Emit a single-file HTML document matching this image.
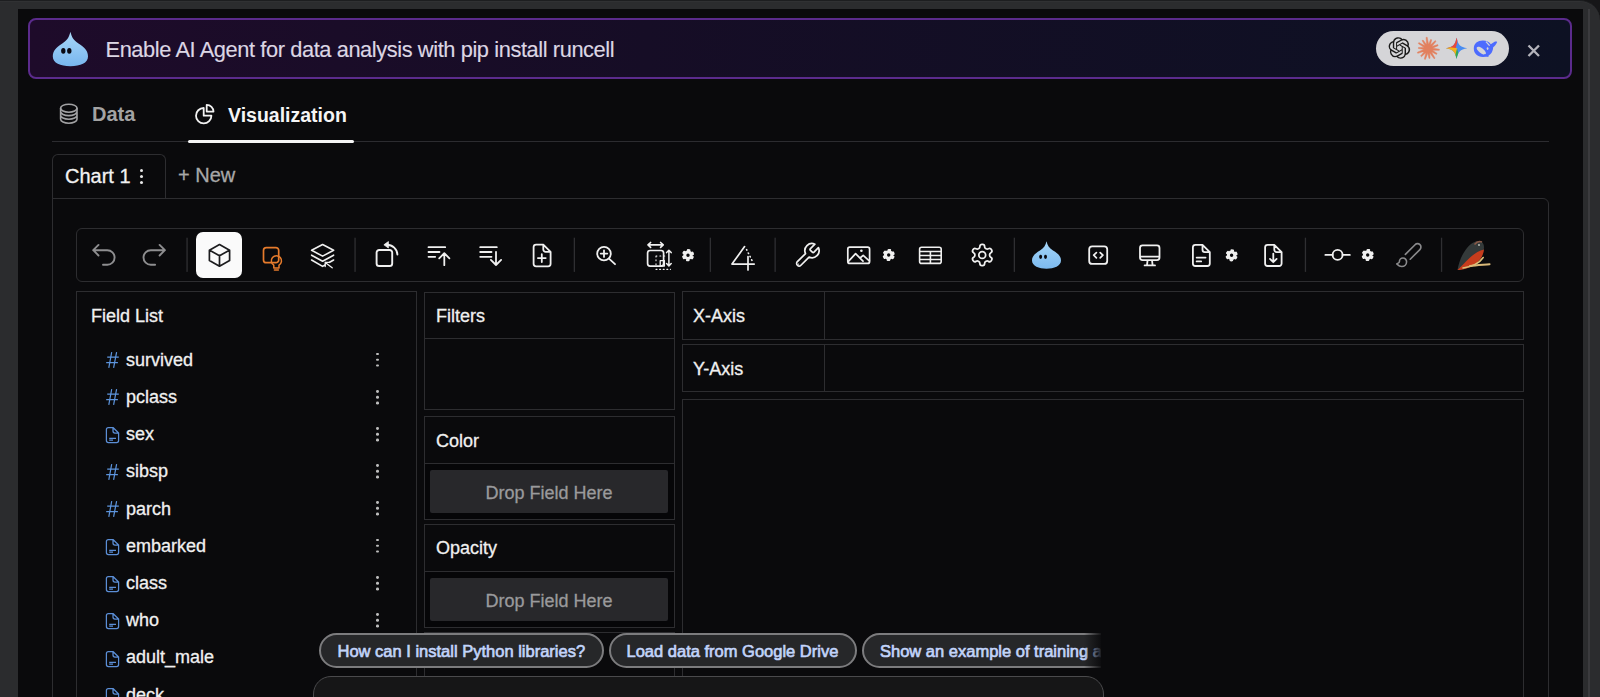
<!DOCTYPE html>
<html><head><meta charset="utf-8">
<style>
*{box-sizing:border-box;margin:0;padding:0}
html,body{width:1600px;height:697px;overflow:hidden;background:#161618}
body{font-family:"Liberation Sans",sans-serif;position:relative}
.a{position:absolute}
.t{position:absolute;white-space:nowrap;line-height:1;-webkit-text-stroke:0.3px currentColor}
.b{border:1px solid #2d2d30}
svg{position:absolute;overflow:visible}
.pt{font-size:16.5px;color:#c2d4fa;-webkit-text-stroke:0.65px #c2d4fa}
.fl{left:126px;font-size:18px;color:#f0f0f0}
.keb{position:absolute;left:376.2px;width:2.8px;height:2.8px;border-radius:50%;background:#bdbdbd;box-shadow:0 5.8px 0 #bdbdbd,0 11.6px 0 #bdbdbd}
</style></head><body>
<!-- window frame -->
<div class="a" style="left:0;top:0;width:1600px;height:697px;background:#2b2c2e;border-top-right-radius:20px;border-top:1px solid #1d1e20;box-shadow:inset 0 1px 0 #303133"></div>
<div class="a" style="left:1588px;top:9px;width:2px;height:688px;background:#3b3b3e"></div>
<div class="a" style="left:18px;top:9px;width:1564.5px;height:688px;background:#0a0a0c"></div>

<!-- banner -->
<div class="a" style="left:28px;top:18px;width:1544px;height:61px;border:2px solid #5b2b8c;border-radius:8px;background:linear-gradient(90deg,#1e0b2a 0%,#160d26 40%,#0d1123 100%)"></div>
<div class="t" style="left:105.5px;top:38.6px;font-size:21.8px;letter-spacing:-0.4px;color:#dcd6e4;-webkit-text-stroke:0.15px #dcd6e4">Enable AI Agent for data analysis with pip install runcell</div>
<div class="a" style="left:1376px;top:31px;width:133px;height:35px;border-radius:18px;background:#d5d5d8"></div>
<!--BANNER-->
<svg style="left:0;top:0" width="1600" height="100" viewBox="0 0 1600 100"><defs><linearGradient id="dg2" x1="0" y1="0" x2="0" y2="1"><stop offset="0" stop-color="#a9d8f9"/><stop offset="1" stop-color="#78b6ee"/></linearGradient></defs><path d="M70.4 31.8C71.6 37 73.6 40.5 78.5 43.5C85 47.5 88 51 88 56.5C88 63 80.5 66.2 70.4 66.2C60.3 66.2 52.8 63 52.8 56.5C52.8 51 55.8 47.5 62.3 43.5C67.2 40.5 69.2 37 70.4 31.8Z" fill="url(#dg2)"/><ellipse cx="63.3" cy="50.8" rx="2.2" ry="2.9" fill="#0a0a14"/><ellipse cx="69.3" cy="50.8" rx="2.2" ry="2.9" fill="#0a0a14"/><g transform="translate(1388.6 37.2) scale(0.9)"><path fill="#1a1a1a" d="M22.2819 9.8211a5.9847 5.9847 0 0 0-.5157-4.9108 6.0462 6.0462 0 0 0-6.5098-2.9A6.0651 6.0651 0 0 0 4.9807 4.1818a5.9847 5.9847 0 0 0-3.9977 2.9 6.0462 6.0462 0 0 0 .7427 7.0966 5.98 5.98 0 0 0 .511 4.9107 6.051 6.051 0 0 0 6.5146 2.9001A5.9847 5.9847 0 0 0 13.2599 24a6.0557 6.0557 0 0 0 5.7718-4.2058 5.9894 5.9894 0 0 0 3.9977-2.9001 6.0557 6.0557 0 0 0-.7475-7.0729zm-9.022 12.6081a4.4755 4.4755 0 0 1-2.8764-1.0408l.1419-.0804 4.7783-2.7582a.7948.7948 0 0 0 .3927-.6813v-6.7369l2.02 1.1686a.071.071 0 0 1 .038.052v5.5826a4.504 4.504 0 0 1-4.4945 4.4944zm-9.6607-4.1254a4.4708 4.4708 0 0 1-.5346-3.0137l.142.0852 4.783 2.7582a.7712.7712 0 0 0 .7806 0l5.8428-3.3685v2.3324a.0804.0804 0 0 1-.0332.0615L9.74 19.9502a4.4992 4.4992 0 0 1-6.1408-1.6464zM2.3408 7.8956a4.485 4.485 0 0 1 2.3655-1.9728V11.6a.7664.7664 0 0 0 .3879.6765l5.8144 3.3543-2.0201 1.1685a.0757.0757 0 0 1-.071 0l-4.8303-2.7865A4.504 4.504 0 0 1 2.3408 7.872zm16.5963 3.8558L13.1038 8.364 15.1192 7.2a.0757.0757 0 0 1 .071 0l4.8303 2.7913a4.4944 4.4944 0 0 1-.6765 8.1042v-5.6772a.79.79 0 0 0-.407-.667zm2.0107-3.0231l-.142-.0852-4.7735-2.7818a.7759.7759 0 0 0-.7854 0L9.409 9.2297V6.8974a.0662.0662 0 0 1 .0284-.0615l4.8303-2.7866a4.4992 4.4992 0 0 1 6.6802 4.66zM8.3065 12.863l-2.02-1.1638a.0804.0804 0 0 1-.038-.0567V6.0742a4.4992 4.4992 0 0 1 7.3757-3.4537l-.142.0805L8.704 5.459a.7948.7948 0 0 0-.3927.6813zm1.0976-2.3654l2.602-1.4998 2.6069 1.4998v2.9994l-2.5974 1.4997-2.6067-1.4997Z"/></g><path d="M1428.09 50.05L1439.31 50.34L1439.41 49.22L1428.31 47.55ZM1427.56 49.87L1436.51 54.39L1437.08 53.42L1428.84 47.73ZM1427.16 49.49L1434.15 58.78L1435.08 58.15L1429.24 48.11ZM1426.96 48.97L1428.96 58.39L1430.07 58.23L1429.44 48.63ZM1427.01 48.42L1424.29 59.10L1425.36 59.44L1429.39 49.18ZM1427.29 47.94L1420.62 55.95L1421.44 56.72L1429.11 49.66ZM1427.76 47.63L1417.34 52.31L1417.74 53.36L1428.64 49.97ZM1428.31 47.55L1418.49 47.39L1418.39 48.51L1428.09 50.05ZM1428.84 47.73L1418.86 42.60L1418.28 43.56L1427.56 49.87ZM1429.24 48.11L1423.03 39.99L1422.09 40.61L1427.16 49.49ZM1429.44 48.63L1427.17 37.23L1426.06 37.39L1426.96 48.97ZM1429.39 49.18L1431.68 39.83L1430.61 39.49L1427.01 48.42ZM1429.11 49.66L1436.05 41.36L1435.24 40.59L1427.29 47.94ZM1428.64 49.97L1438.13 45.65L1437.73 44.60L1427.76 47.63Z" fill="#e2805e" stroke="#e2805e" stroke-width="0.5" stroke-linejoin="round"/><circle cx="1428.2" cy="48.8" r="2.6" fill="#e2805e"/><clipPath id="gc"><path d="M1456.6 37.5C1458.1999999999998 45.099999999999994 1459.8 46.699999999999996 1467.3999999999999 48.3C1459.8 49.9 1458.1999999999998 51.5 1456.6 59.099999999999994C1455.0 51.5 1453.3999999999999 49.9 1445.8 48.3C1453.3999999999999 46.699999999999996 1455.0 45.099999999999994 1456.6 37.5Z"/></clipPath><g clip-path="url(#gc)"><rect x="1445.8" y="37.5" width="21.6" height="21.6" fill="#4a8cf0"/><path d="M1445.8 37.5H1458.6L1455.6 48.3H1445.8Z" fill="#e9493a"/><path d="M1445.8 46.8L1457.1 48.3L1455.1 59.099999999999994H1445.8Z" fill="#f2b21c"/><path d="M1454.1 59.099999999999994L1457.1 48.8L1460.1 59.099999999999994Z" fill="#33a852"/></g><path fill="#4d6bfe" d="M1473.8 48.5C1473.8 43.5 1477.8 40.6 1482.8 40.6C1486.6 40.6 1489 42 1490.8 44.2L1494.2 42C1495.3 41.3 1496.6 41.4 1497.2 41.9C1496.3 44 1494.8 45.8 1493.2 47.2C1492.8 52.5 1489.8 56.8 1483.2 57C1477.6 57.2 1473.8 53.5 1473.8 48.5Z"/><ellipse cx="1481.3" cy="50.6" rx="5.6" ry="2.4" transform="rotate(38 1481.3 50.6)" fill="#d5d5d8"/><path d="M1486 41.6L1489.6 45.6" stroke="#d5d5d8" stroke-width="1.3"/><ellipse cx="1487.6" cy="48.6" rx="0.9" ry="1.4" fill="#d5d5d8"/><path d="M1484 55L1488.5 56.2" stroke="#4d6bfe" stroke-width="1.4"/></svg>
<!--/BANNER-->
<svg style="left:1526px;top:43px" width="16" height="16" viewBox="0 0 16 16"><path d="M2.5 2.5L13 13M13 2.5L2.5 13" stroke="#b4b4bc" stroke-width="2.3" stroke-linecap="butt"/></svg>

<!-- tabs -->
<div class="a" style="left:52px;top:141px;width:1497px;height:1px;background:#2c2c30"></div>
<div class="t" style="left:92px;top:104px;font-size:20px;font-weight:700;color:#a3a3a3;-webkit-text-stroke:0">Data</div>
<div class="t" style="left:228px;top:105.5px;font-size:19.5px;font-weight:700;color:#f5f5f5;-webkit-text-stroke:0">Visualization</div>
<div class="a" style="left:188px;top:140px;width:166px;height:3px;background:#f5f5f5;border-radius:2px"></div>

<!-- chart tab -->
<div class="a" style="left:52px;top:154px;width:114px;height:45px;border:1px solid #2d2d30;border-bottom:none;border-radius:6px 6px 0 0"></div>
<div class="t" style="left:65px;top:166px;font-size:20px;color:#f2f2f2">Chart 1</div>
<div class="t" style="left:178px;top:165px;font-size:20px;color:#a8a8a8">+ New</div>
<svg style="left:0;top:0" width="400" height="200" viewBox="0 0 400 200">
<g fill="none" stroke="#a2a2a4" stroke-width="1.6" stroke-linecap="round"><ellipse cx="68.8" cy="108.2" rx="8.2" ry="4"/><path d="M60.6 108.2V119.2A8.2 4 0 0 0 77 119.2V108.2M60.6 111.6A8.2 4 0 0 0 77 111.6M60.6 115.2A8.2 4 0 0 0 77 115.2"/></g>
<g fill="none" stroke="#f2f2f2" stroke-width="1.8" stroke-linejoin="round"><path d="M203.7 108A7.7 7.7 0 1 0 211.4 115.7H203.7Z"/><path d="M206.7 104.8V111.6H213.5A6.8 6.8 0 0 0 206.7 104.8Z"/></g>
</svg>
<div class="a" style="left:140.2px;top:169px;width:3px;height:3px;border-radius:50%;background:#e8e8e8;box-shadow:0 6px 0 #e8e8e8,0 12px 0 #e8e8e8"></div>

<!-- container -->
<div class="a" style="left:52px;top:198px;width:1496.5px;height:520px;border:1px solid #2d2d30;border-top-right-radius:6px"></div>

<!-- toolbar -->
<div class="a" style="left:76px;top:228px;width:1448px;height:54px;border:1px solid #2d2d30;border-radius:6px"></div>
<div class="a" style="left:196px;top:232px;width:46px;height:46px;background:#fafafa;border-radius:7px"></div>
<!--TOOLBAR-->
<svg style="left:0;top:0" width="1600" height="697" viewBox="0 0 1600 697"><defs><linearGradient id="dg" x1="0" y1="0" x2="0" y2="1"><stop offset="0" stop-color="#a6d6f8"/><stop offset="1" stop-color="#7cbaf0"/></linearGradient></defs><rect x="186.4" y="237.7" width="1.3" height="34.2" fill="#2f2f32"/><rect x="354.4" y="237.7" width="1.3" height="34.2" fill="#2f2f32"/><rect x="573.6999999999999" y="237.7" width="1.3" height="34.2" fill="#2f2f32"/><rect x="709.6999999999999" y="237.7" width="1.3" height="34.2" fill="#2f2f32"/><rect x="774.5" y="237.7" width="1.3" height="34.2" fill="#2f2f32"/><rect x="1013.6999999999999" y="237.7" width="1.3" height="34.2" fill="#2f2f32"/><rect x="1304.8000000000002" y="237.7" width="1.3" height="34.2" fill="#2f2f32"/><rect x="1440.9" y="237.7" width="1.3" height="34.2" fill="#2f2f32"/><path d="M98.5 244.9L93.2 250.2L98.5 255.5M93.2 250.2H107.3A7.3 7.3 0 0 1 107.3 264.8H103" fill="none" stroke="#8e8e90" stroke-width="1.9" stroke-linecap="round" stroke-linejoin="round" /><path d="M159.6 244.9L164.9 250.2L159.6 255.5M164.9 250.2H150.8A7.3 7.3 0 0 0 150.8 264.8H155.1" fill="none" stroke="#8e8e90" stroke-width="1.9" stroke-linecap="round" stroke-linejoin="round" /><path d="M219.5 244.6L229.6 250.2V260.6L219.5 266.2L209.4 260.6V250.2ZM209.6 250.3L219.5 255.7L229.4 250.3M219.5 255.7V266" fill="none" stroke="#1c1c1e" stroke-width="1.7" stroke-linecap="round" stroke-linejoin="round" /><path d="M266.3 247.6H275.9A2.8 2.8 0 0 1 278.7 250.4V259.9A2.8 2.8 0 0 1 275.9 262.7H266.3A2.8 2.8 0 0 1 263.5 259.9V250.4A2.8 2.8 0 0 1 266.3 247.6Z" fill="none" stroke="#e67b2c" stroke-width="1.7" stroke-linecap="round" stroke-linejoin="round" /><path d="M273.8 265.2A5.1 5.1 0 1 1 279 265.2V268H273.8ZM274.4 269.9H278.4" fill="none" stroke="#e67b2c" stroke-width="1.5" stroke-linecap="round" stroke-linejoin="round" /><path d="M322.6 244.5L333.6 250.3L322.6 256.1L311.6 250.3ZM311.6 255.2L322.6 261.2L333.6 255.2M311.6 260L322.6 266.4L325 265M333.6 260L329.6 262.3" fill="none" stroke="#f0f0f0" stroke-width="1.6" stroke-linecap="round" stroke-linejoin="round" /><path d="M325.2 262.4L332.2 267.8M325.2 262.4H329.5M325.2 262.4V266.5" fill="none" stroke="#f0f0f0" stroke-width="1.3" stroke-linecap="round" stroke-linejoin="round" /><path d="M379.2 250H389.6A2.6 2.6 0 0 1 392.2 252.6V263.4A2.6 2.6 0 0 1 389.6 266H379.2A2.6 2.6 0 0 1 376.6 263.4V252.6A2.6 2.6 0 0 1 379.2 250Z" fill="none" stroke="#f0f0f0" stroke-width="1.9" stroke-linecap="round" stroke-linejoin="round" /><path d="M386.8 244.8A10.6 10 0 0 1 397.4 254.6" fill="none" stroke="#f0f0f0" stroke-width="1.9" stroke-linecap="round" stroke-linejoin="round" /><path d="M383.9 244.8L388.4 241.6V248Z" fill="#f0f0f0" stroke="#f0f0f0" stroke-width="0.8" stroke-linejoin="round"/><path d="M428.5 247.2H445.2M428.5 252H439.5M428.5 256.8H435.2M444.3 253.2V265.2M439.2 258.3L444.3 253.2L449.4 258.3" fill="none" stroke="#f0f0f0" stroke-width="1.8" stroke-linecap="round" stroke-linejoin="round" /><path d="M480.2 247.2H496.8M480.2 252H491.5M480.2 256.8H491.5M496 251.8V265M490.9 259.9L496 265L501.1 259.9" fill="none" stroke="#f0f0f0" stroke-width="1.8" stroke-linecap="round" stroke-linejoin="round" /><path d="M536.1 244.6H543.3000000000001L550.6 251.9V263.8A2.5 2.5 0 0 1 548.1 266.3H536.1A2.5 2.5 0 0 1 533.6 263.8V247.1A2.5 2.5 0 0 1 536.1 244.6ZM543.3000000000001 244.6V249.6A2.3 2.3 0 0 0 545.6 251.9H550.6" fill="none" stroke="#f0f0f0" stroke-width="1.8" stroke-linecap="round" stroke-linejoin="round" /><path d="M541.8 254.2V262M537.9 258.1H545.7" fill="none" stroke="#f0f0f0" stroke-width="1.8" stroke-linecap="round" stroke-linejoin="round" /><circle cx="604" cy="253.6" r="6.8" fill="none" stroke="#f0f0f0" stroke-width="1.8"/><path d="M609 258.6L615 264.2M604 250.3V256.9M600.7 253.6H607.3" fill="none" stroke="#f0f0f0" stroke-width="1.8" stroke-linecap="round" stroke-linejoin="round" /><path d="M648.2 244.9H663M650.6 242.5L648 244.9L650.6 247.3M660.6 242.5L663.2 244.9L660.6 247.3" fill="none" stroke="#f0f0f0" stroke-width="1.7" stroke-linecap="round" stroke-linejoin="round" /><path d="M650.1 250.5H661.1A2.5 2.5 0 0 1 663.6 253V263.6A2.5 2.5 0 0 1 661.1 266.1H650.1A2.5 2.5 0 0 1 647.6 263.6V253A2.5 2.5 0 0 1 650.1 250.5Z" fill="none" stroke="#f0f0f0" stroke-width="1.7" stroke-linecap="round" stroke-linejoin="round" /><path d="M660.2 260.6H664.4V266H660.2Z" fill="none" stroke="#f0f0f0" stroke-width="1.3" stroke-linecap="round" stroke-linejoin="round" /><path d="M668.9 250.4V265.8M666.6 252.6L668.9 250.2L671.2 252.6M666.6 263.6L668.9 266L671.2 263.6" fill="none" stroke="#f0f0f0" stroke-width="1.5" stroke-linecap="round" stroke-linejoin="round" /><path d="M656 256V266M656 256H666" fill="none" stroke="#f0f0f0" stroke-width="1.1" stroke-linecap="round" stroke-linejoin="round" stroke-dasharray="0.9 3"/><path d="M656 269.3H670.5" fill="none" stroke="#f0f0f0" stroke-width="1.2" stroke-linecap="round" stroke-linejoin="round" stroke-dasharray="1 2.6"/><circle cx="688" cy="255.2" r="3.25" fill="none" stroke="#f0f0f0" stroke-width="3.1"/><circle cx="688" cy="255.2" r="5.0" fill="none" stroke="#f0f0f0" stroke-width="2.2" stroke-dasharray="1.4 3.84" stroke-linecap="round" transform="rotate(22 688 255.2)"/><path d="M744.6 246.6L732 264.1H754.2M748 256.6V270" fill="none" stroke="#f0f0f0" stroke-width="1.7" stroke-linecap="round" stroke-linejoin="round" /><path d="M746.6 249.6L752.8 262" fill="none" stroke="#f0f0f0" stroke-width="1.6" stroke-linecap="round" stroke-linejoin="round" stroke-dasharray="0.6 3.2"/><g transform="translate(793.1 241.2) scale(1.18)"><path d="M14.7 6.3a1 1 0 0 0 0 1.4l1.6 1.6a1 1 0 0 0 1.4 0l3.77-3.77a6 6 0 0 1-7.94 7.94l-6.91 6.91a2.12 2.12 0 0 1-3-3l6.91-6.91a6 6 0 0 1 7.94-7.94l-3.76 3.76z" fill="none" stroke="#f0f0f0" stroke-width="1.45" stroke-linecap="round" stroke-linejoin="round"/><circle cx="4.6" cy="19.4" r="0.6" fill="#f0f0f0"/></g><path d="M849.8 247.2H867.6A2 2 0 0 1 869.6 249.2V261.4A2 2 0 0 1 867.6 263.4H849.8A2 2 0 0 1 847.8 261.4V249.2A2 2 0 0 1 849.8 247.2Z" fill="none" stroke="#f0f0f0" stroke-width="1.7" stroke-linecap="round" stroke-linejoin="round" /><path d="M848.2 261.6L855.6 253.6L863 261.2M860 258L863.2 255.4L869.3 260.8" fill="none" stroke="#f0f0f0" stroke-width="1.7" stroke-linecap="round" stroke-linejoin="round" /><circle cx="861.4" cy="250.8" r="1.3" fill="#f0f0f0"/><circle cx="888.7" cy="255" r="3.25" fill="none" stroke="#f0f0f0" stroke-width="3.1"/><circle cx="888.7" cy="255" r="5.0" fill="none" stroke="#f0f0f0" stroke-width="2.2" stroke-dasharray="1.4 3.84" stroke-linecap="round" transform="rotate(22 888.7 255)"/><path d="M921.6 247.2H939.2A2 2 0 0 1 941.2 249.2V261.4A2 2 0 0 1 939.2 263.4H921.6A2 2 0 0 1 919.6 261.4V249.2A2 2 0 0 1 921.6 247.2ZM919.6 251.5H941.2M919.6 255.5H941.2M919.6 259.5H941.2M930.4 251.5V263.4" fill="none" stroke="#f0f0f0" stroke-width="1.6" stroke-linecap="round" stroke-linejoin="round" /><g transform="translate(969.4 242.2) scale(1.07)"><path d="M12.22 2h-.44a2 2 0 0 0-2 2v.18a2 2 0 0 1-1 1.73l-.43.25a2 2 0 0 1-2 0l-.15-.08a2 2 0 0 0-2.73.73l-.22.38a2 2 0 0 0 .73 2.730l.15.1a2 2 0 0 1 1 1.72v.51a2 2 0 0 1-1 1.74l-.15.09a2 2 0 0 0-.73 2.73l.22.38a2 2 0 0 0 2.73.73l.15-.08a2 2 0 0 1 2 0l.43.25a2 2 0 0 1 1 1.73V20a2 2 0 0 0 2 2h.44a2 2 0 0 0 2-2v-.18a2 2 0 0 1 1-1.73l.43-.25a2 2 0 0 1 2 0l.15.08a2 2 0 0 0 2.73-.73l.22-.39a2 2 0 0 0-.73-2.73l-.15-.08a2 2 0 0 1-1-1.74v-.5a2 2 0 0 1 1-1.74l.15-.09a2 2 0 0 0 .73-2.73l-.22-.38a2 2 0 0 0-2.730-.73l-.15.08a2 2 0 0 1-2 0l-.43-.25a2 2 0 0 1-1-1.73V4a2 2 0 0 0-2-2z" fill="none" stroke="#f0f0f0" stroke-width="1.65" stroke-linecap="round" stroke-linejoin="round"/><circle cx="12" cy="12" r="3.2" fill="none" stroke="#f0f0f0" stroke-width="1.65"/></g><path d="M1046.5 241.2C1047.4 245 1049 248 1053 250.6C1058 253.6 1061 256 1061 260.5C1061 266 1054 268.7 1046.5 268.7C1039 268.7 1032 266 1032 260.5C1032 256 1035 253.6 1040 250.6C1044 248 1045.6 245 1046.5 241.2Z" fill="url(#dg)"/><ellipse cx="1040.6" cy="256.8" rx="1.5" ry="2.1" fill="#0a0a10"/><ellipse cx="1045.5" cy="256.8" rx="1.5" ry="2.1" fill="#0a0a10"/><path d="M1092.2 246.3H1104.2A3 3 0 0 1 1107.2 249.3V260.9A3 3 0 0 1 1104.2 263.9H1092.2A3 3 0 0 1 1089.2 260.9V249.3A3 3 0 0 1 1092.2 246.3Z" fill="none" stroke="#f0f0f0" stroke-width="1.8" stroke-linecap="round" stroke-linejoin="round" /><path d="M1096.4 252.6L1093.7 255.2L1096.4 257.8M1100.2 252.6L1102.9 255.2L1100.2 257.8" fill="none" stroke="#f0f0f0" stroke-width="1.7" stroke-linecap="round" stroke-linejoin="round" /><path d="M1142.5 245.4H1157A2.5 2.5 0 0 1 1159.5 247.9V257.6A2.5 2.5 0 0 1 1157 260.1H1142.5A2.5 2.5 0 0 1 1140 257.6V247.9A2.5 2.5 0 0 1 1142.5 245.4ZM1140.2 256.6H1159.3M1147.6 260.2L1147 265.2M1152 260.2L1152.6 265.2M1144.6 265.4H1155" fill="none" stroke="#f0f0f0" stroke-width="1.8" stroke-linecap="round" stroke-linejoin="round" /><path d="M1195.4 244.8H1202.5L1209.8 252.10000000000002V263.5A2.5 2.5 0 0 1 1207.3 266H1195.4A2.5 2.5 0 0 1 1192.9 263.5V247.3A2.5 2.5 0 0 1 1195.4 244.8ZM1202.5 244.8V249.8A2.3 2.3 0 0 0 1204.8 252.10000000000002H1209.8" fill="none" stroke="#f0f0f0" stroke-width="1.8" stroke-linecap="round" stroke-linejoin="round" /><path d="M1196.6 257.6H1205.6M1196.6 261.4H1201.2" fill="none" stroke="#f0f0f0" stroke-width="1.7" stroke-linecap="round" stroke-linejoin="round" /><circle cx="1231.6" cy="255.3" r="3.25" fill="none" stroke="#f0f0f0" stroke-width="3.1"/><circle cx="1231.6" cy="255.3" r="5.0" fill="none" stroke="#f0f0f0" stroke-width="2.2" stroke-dasharray="1.4 3.84" stroke-linecap="round" transform="rotate(22 1231.6 255.3)"/><path d="M1267.6 244.8H1274.3L1281.6 252.10000000000002V263.5A2.5 2.5 0 0 1 1279.1 266H1267.6A2.5 2.5 0 0 1 1265.1 263.5V247.3A2.5 2.5 0 0 1 1267.6 244.8ZM1274.3 244.8V249.8A2.3 2.3 0 0 0 1276.6 252.10000000000002H1281.6" fill="none" stroke="#f0f0f0" stroke-width="1.8" stroke-linecap="round" stroke-linejoin="round" /><path d="M1273.3 253.6V262M1270 258.9L1273.3 262.2L1276.6 258.9" fill="none" stroke="#f0f0f0" stroke-width="1.8" stroke-linecap="round" stroke-linejoin="round" /><circle cx="1337.6" cy="254.9" r="5" fill="none" stroke="#f0f0f0" stroke-width="1.9"/><path d="M1325.4 254.9H1332.6M1342.6 254.9H1349.8" fill="none" stroke="#f0f0f0" stroke-width="1.9" stroke-linecap="round" stroke-linejoin="round" /><circle cx="1367.7" cy="255" r="3.25" fill="none" stroke="#f0f0f0" stroke-width="3.1"/><circle cx="1367.7" cy="255" r="5.0" fill="none" stroke="#f0f0f0" stroke-width="2.2" stroke-dasharray="1.4 3.84" stroke-linecap="round" transform="rotate(22 1367.7 255)"/><g transform="translate(1394.5 240.1) scale(1.2)"><path d="m9.06 11.9 8.07-8.06a2.85 2.85 0 1 1 4.03 4.03l-8.06 8.08M7.07 14.94c-1.66 0-3 1.35-3 3.02 0 1.330-2.5 1.52-2 2.02 1.08 1.1 2.490 2.02 4 2.02 2.2 0 4-1.8 4-4.04a3.010 3.010 0 0 0-3-3.02z" fill="none" stroke="#8a8a8c" stroke-width="1.35" stroke-linecap="round" stroke-linejoin="round"/></g><path d="M1457.5 270C1458.5 264 1461 256 1465.5 250C1469 245 1473.5 241.5 1478 241C1481.5 240.8 1484 243 1484 247C1484 253 1481 259 1476 263.5C1471 267.5 1463.5 270 1457.5 270Z" fill="#343a3a"/><path d="M1457.5 270C1461 266.5 1465.5 262 1469.5 258C1473.5 254 1478.5 251 1484 249.5C1483.5 255 1480.5 260 1476 263.5C1471 267.5 1463.5 270 1457.5 270Z" fill="#c63c1c"/><path d="M1463 268C1470 267 1478.5 264.5 1483.2 257.5" stroke="#dcc07a" stroke-width="1.6" fill="none" stroke-linecap="round"/><path d="M1470 266C1476 265.2 1483 264.8 1489.6 264.2" stroke="#d9b878" stroke-width="2" fill="none" stroke-linecap="round"/><path d="M1474.5 244.5C1476.5 242 1479.5 240.8 1482 242" stroke="#8a5a48" stroke-width="1.5" fill="none"/><circle cx="1479" cy="245" r="0.9" fill="#c9c9c0"/></svg>
<!--/TOOLBAR-->

<!-- panels -->
<div class="a b" style="left:76px;top:291px;width:341px;height:420px"></div>
<div class="t" style="left:91px;top:307px;font-size:18px;color:#f0f0f0">Field List</div>
<div class="t fl" style="top:350.8px">survived</div>
<svg style="left:105px;top:352.0px" width="15" height="16" viewBox="0 0 15 16"><path d="M6.7 0.2L3.8 15.8M11.6 0.2L8.6 15.8M2.2 5.1H13.8M1.2 10.7H12.9" stroke="#5d95de" stroke-width="1.2" fill="none"/></svg>
<div class="keb" style="top:352.6px"></div>
<div class="t fl" style="top:388.0px">pclass</div>
<svg style="left:105px;top:389.2px" width="15" height="16" viewBox="0 0 15 16"><path d="M6.7 0.2L3.8 15.8M11.6 0.2L8.6 15.8M2.2 5.1H13.8M1.2 10.7H12.9" stroke="#5d95de" stroke-width="1.2" fill="none"/></svg>
<div class="keb" style="top:389.8px"></div>
<div class="t fl" style="top:425.2px">sex</div>
<svg style="left:105px;top:426.4px" width="15" height="18" viewBox="0 0 15 18"><path d="M3.4 1.5H8L13.6 7V14.6Q13.6 16.6 11.6 16.6H3.4Q1.4 16.6 1.4 14.6V3.5Q1.4 1.5 3.4 1.5Z M8 1.5V5Q8 7 10 7H13.6" stroke="#5b8ed6" stroke-width="1.25" fill="none" stroke-linejoin="round"/><path d="M4.2 12.3H11M4.2 14.1H8" stroke="#5b8ed6" stroke-width="1.2"/></svg>
<div class="keb" style="top:427.0px"></div>
<div class="t fl" style="top:462.4px">sibsp</div>
<svg style="left:105px;top:463.6px" width="15" height="16" viewBox="0 0 15 16"><path d="M6.7 0.2L3.8 15.8M11.6 0.2L8.6 15.8M2.2 5.1H13.8M1.2 10.7H12.9" stroke="#5d95de" stroke-width="1.2" fill="none"/></svg>
<div class="keb" style="top:464.2px"></div>
<div class="t fl" style="top:499.6px">parch</div>
<svg style="left:105px;top:500.8px" width="15" height="16" viewBox="0 0 15 16"><path d="M6.7 0.2L3.8 15.8M11.6 0.2L8.6 15.8M2.2 5.1H13.8M1.2 10.7H12.9" stroke="#5d95de" stroke-width="1.2" fill="none"/></svg>
<div class="keb" style="top:501.4px"></div>
<div class="t fl" style="top:536.8px">embarked</div>
<svg style="left:105px;top:538.0px" width="15" height="18" viewBox="0 0 15 18"><path d="M3.4 1.5H8L13.6 7V14.6Q13.6 16.6 11.6 16.6H3.4Q1.4 16.6 1.4 14.6V3.5Q1.4 1.5 3.4 1.5Z M8 1.5V5Q8 7 10 7H13.6" stroke="#5b8ed6" stroke-width="1.25" fill="none" stroke-linejoin="round"/><path d="M4.2 12.3H11M4.2 14.1H8" stroke="#5b8ed6" stroke-width="1.2"/></svg>
<div class="keb" style="top:538.6px"></div>
<div class="t fl" style="top:574.0px">class</div>
<svg style="left:105px;top:575.2px" width="15" height="18" viewBox="0 0 15 18"><path d="M3.4 1.5H8L13.6 7V14.6Q13.6 16.6 11.6 16.6H3.4Q1.4 16.6 1.4 14.6V3.5Q1.4 1.5 3.4 1.5Z M8 1.5V5Q8 7 10 7H13.6" stroke="#5b8ed6" stroke-width="1.25" fill="none" stroke-linejoin="round"/><path d="M4.2 12.3H11M4.2 14.1H8" stroke="#5b8ed6" stroke-width="1.2"/></svg>
<div class="keb" style="top:575.8px"></div>
<div class="t fl" style="top:611.2px">who</div>
<svg style="left:105px;top:612.4px" width="15" height="18" viewBox="0 0 15 18"><path d="M3.4 1.5H8L13.6 7V14.6Q13.6 16.6 11.6 16.6H3.4Q1.4 16.6 1.4 14.6V3.5Q1.4 1.5 3.4 1.5Z M8 1.5V5Q8 7 10 7H13.6" stroke="#5b8ed6" stroke-width="1.25" fill="none" stroke-linejoin="round"/><path d="M4.2 12.3H11M4.2 14.1H8" stroke="#5b8ed6" stroke-width="1.2"/></svg>
<div class="keb" style="top:613.0px"></div>
<div class="t fl" style="top:648.4px">adult_male</div>
<svg style="left:105px;top:649.6px" width="15" height="18" viewBox="0 0 15 18"><path d="M3.4 1.5H8L13.6 7V14.6Q13.6 16.6 11.6 16.6H3.4Q1.4 16.6 1.4 14.6V3.5Q1.4 1.5 3.4 1.5Z M8 1.5V5Q8 7 10 7H13.6" stroke="#5b8ed6" stroke-width="1.25" fill="none" stroke-linejoin="round"/><path d="M4.2 12.3H11M4.2 14.1H8" stroke="#5b8ed6" stroke-width="1.2"/></svg>
<div class="t fl" style="top:685.6px">deck</div>
<svg style="left:105px;top:686.8px" width="15" height="18" viewBox="0 0 15 18"><path d="M3.4 1.5H8L13.6 7V14.6Q13.6 16.6 11.6 16.6H3.4Q1.4 16.6 1.4 14.6V3.5Q1.4 1.5 3.4 1.5Z M8 1.5V5Q8 7 10 7H13.6" stroke="#5b8ed6" stroke-width="1.25" fill="none" stroke-linejoin="round"/><path d="M4.2 12.3H11M4.2 14.1H8" stroke="#5b8ed6" stroke-width="1.2"/></svg>

<div class="a b" style="left:424px;top:292px;width:251px;height:118px"></div>
<div class="a" style="left:424px;top:338px;width:251px;height:1px;background:#2d2d30"></div>
<div class="t" style="left:436px;top:307px;font-size:18px;color:#f0f0f0">Filters</div>

<div class="a b" style="left:424px;top:416px;width:251px;height:104px"></div>
<div class="a" style="left:424px;top:463px;width:251px;height:1px;background:#2d2d30"></div>
<div class="t" style="left:436px;top:432px;font-size:18px;color:#f0f0f0">Color</div>
<div class="a" style="left:425px;top:464px;width:249px;height:55px;background:#060608"></div>
<div class="a" style="left:430px;top:470px;width:238px;height:43px;background:#28282b;border-radius:2px"></div>
<div class="t" style="left:430px;top:484px;width:238px;text-align:center;font-size:18px;color:#9a9a9c">Drop Field Here</div>

<div class="a b" style="left:424px;top:524px;width:251px;height:104px"></div>
<div class="a" style="left:424px;top:571px;width:251px;height:1px;background:#2d2d30"></div>
<div class="t" style="left:436px;top:539px;font-size:18px;color:#f0f0f0">Opacity</div>
<div class="a" style="left:425px;top:572px;width:249px;height:55px;background:#060608"></div>
<div class="a" style="left:430px;top:578px;width:238px;height:43px;background:#28282b;border-radius:2px"></div>
<div class="t" style="left:430px;top:592px;width:238px;text-align:center;font-size:18px;color:#9a9a9c">Drop Field Here</div>

<div class="a b" style="left:424px;top:632px;width:251px;height:100px"></div>

<div class="a b" style="left:682px;top:291px;width:842px;height:49px"></div>
<div class="a" style="left:824px;top:291px;width:1px;height:49px;background:#2d2d30"></div>
<div class="t" style="left:693px;top:307px;font-size:18px;color:#f0f0f0">X-Axis</div>
<div class="a b" style="left:682px;top:344px;width:842px;height:48px"></div>
<div class="a" style="left:824px;top:344px;width:1px;height:48px;background:#2d2d30"></div>
<div class="t" style="left:693px;top:360px;font-size:18px;color:#f0f0f0">Y-Axis</div>
<div class="a b" style="left:682px;top:399px;width:842px;height:320px"></div>

<!-- pills -->
<div class="a" style="left:319px;top:633px;width:285px;height:35px;border:2px solid #7c7c7e;border-radius:18px;background:#262729"></div>
<div class="t pt" style="left:337.5px;top:643px">How can I install Python libraries?</div>
<div class="a" style="left:609px;top:633px;width:248px;height:35px;border:2px solid #7c7c7e;border-radius:18px;background:#262729"></div>
<div class="t pt" style="left:626.5px;top:643px">Load data from Google Drive</div>
<div class="a" style="left:862px;top:633px;width:239px;height:35px;overflow:hidden">
  <div class="a" style="left:0;top:0;width:300px;height:35px;border:2px solid #7c7c7e;border-radius:18px;background:#262729"></div>
  <div class="t pt" style="left:18px;top:10px">Show an example of training a model</div>
  <div class="a" style="left:222px;top:0;width:17px;height:35px;background:linear-gradient(90deg,rgba(10,10,12,0),rgba(10,10,12,0.9))"></div>
</div>
<div class="a" style="left:313px;top:676px;width:791px;height:60px;border:1px solid #4a4a4c;border-radius:18px;background:#161617"></div>
</body></html>
